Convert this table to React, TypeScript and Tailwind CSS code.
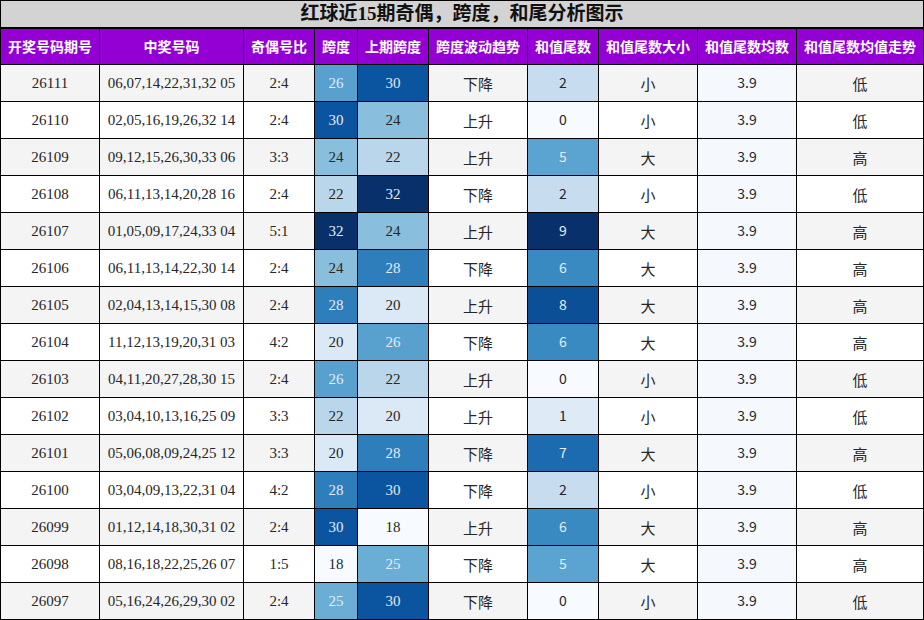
type Row = {
  issue: string;
  nums: string;
  ratio: string;
  span: number;
  prevSpan: number;
  trend: string;
  tail: number;
  size: string;
  avg: string;
  level: string;
};

const rows: Row[] = [
  { issue: "26111", nums: "06,07,14,22,31,32 05", ratio: "2:4", span: 26, prevSpan: 30, trend: "下降", tail: 2, size: "小", avg: "3.9", level: "低" },
  { issue: "26110", nums: "02,05,16,19,26,32 14", ratio: "2:4", span: 30, prevSpan: 24, trend: "上升", tail: 0, size: "小", avg: "3.9", level: "低" },
  { issue: "26109", nums: "09,12,15,26,30,33 06", ratio: "3:3", span: 24, prevSpan: 22, trend: "上升", tail: 5, size: "大", avg: "3.9", level: "高" },
  { issue: "26108", nums: "06,11,13,14,20,28 16", ratio: "2:4", span: 22, prevSpan: 32, trend: "下降", tail: 2, size: "小", avg: "3.9", level: "低" },
  { issue: "26107", nums: "01,05,09,17,24,33 04", ratio: "5:1", span: 32, prevSpan: 24, trend: "上升", tail: 9, size: "大", avg: "3.9", level: "高" },
  { issue: "26106", nums: "06,11,13,14,22,30 14", ratio: "2:4", span: 24, prevSpan: 28, trend: "下降", tail: 6, size: "大", avg: "3.9", level: "高" },
  { issue: "26105", nums: "02,04,13,14,15,30 08", ratio: "2:4", span: 28, prevSpan: 20, trend: "上升", tail: 8, size: "大", avg: "3.9", level: "高" },
  { issue: "26104", nums: "11,12,13,19,20,31 03", ratio: "4:2", span: 20, prevSpan: 26, trend: "下降", tail: 6, size: "大", avg: "3.9", level: "高" },
  { issue: "26103", nums: "04,11,20,27,28,30 15", ratio: "2:4", span: 26, prevSpan: 22, trend: "上升", tail: 0, size: "小", avg: "3.9", level: "低" },
  { issue: "26102", nums: "03,04,10,13,16,25 09", ratio: "3:3", span: 22, prevSpan: 20, trend: "上升", tail: 1, size: "小", avg: "3.9", level: "低" },
  { issue: "26101", nums: "05,06,08,09,24,25 12", ratio: "3:3", span: 20, prevSpan: 28, trend: "下降", tail: 7, size: "大", avg: "3.9", level: "高" },
  { issue: "26100", nums: "03,04,09,13,22,31 04", ratio: "4:2", span: 28, prevSpan: 30, trend: "下降", tail: 2, size: "小", avg: "3.9", level: "低" },
  { issue: "26099", nums: "01,12,14,18,30,31 02", ratio: "2:4", span: 30, prevSpan: 18, trend: "上升", tail: 6, size: "大", avg: "3.9", level: "高" },
  { issue: "26098", nums: "08,16,18,22,25,26 07", ratio: "1:5", span: 18, prevSpan: 25, trend: "下降", tail: 5, size: "大", avg: "3.9", level: "高" },
  { issue: "26097", nums: "05,16,24,26,29,30 02", ratio: "2:4", span: 25, prevSpan: 30, trend: "下降", tail: 0, size: "小", avg: "3.9", level: "低" },
];

const headers = ["开奖号码期号", "中奖号码", "奇偶号比", "跨度", "上期跨度", "跨度波动趋势", "和值尾数", "和值尾数大小", "和值尾数均数", "和值尾数均值走势"];

// Blues scale picked off the picture
const spanColor: Record<number, string> = {
  18: "#f7fbff",
  20: "#dbe9f6",
  22: "#bad6eb",
  24: "#89bfdd",
  25: "#6aaed6",
  26: "#58a1cf",
  28: "#2e7ebc",
  30: "#0b55a0",
  32: "#08306b",
};

const tailColor: Record<number, string> = {
  0: "#f7fbff",
  1: "#deebf7",
  2: "#c8dcf0",
  5: "#5ba3d0",
  6: "#3a8ac2",
  7: "#1c6ab0",
  8: "#0b4f97",
  9: "#08306b",
};

const serif = "font-['Liberation_Serif','Noto_Sans_CJK_SC',serif]";
const cjk = "font-['Noto_Sans_CJK_SC',sans-serif]";
const cell = "flex items-center justify-center border-r border-b border-black";

export default function App() {
  return (
    <div className="h-[620px] w-[924px] overflow-hidden border border-black bg-white text-[#262626]">
      <div
        className={`flex h-[28px] items-center justify-center border-b-2 border-black bg-[#d3d3d3] text-[19px] font-bold text-[#111] ${serif}`}
      >
        红球近15期奇偶，跨度，和尾分析图示
      </div>
      <div className="grid grid-cols-[99px_144px_71px_43px_71px_99px_71px_99px_99px_126px]">
        {headers.map((h, i) => (
          <div
            key={h}
            className={`${cell} h-[36px] bg-[#9400d3] text-[14px] font-bold text-white ${cjk} ${i === 9 ? "border-r-0" : ""}`}
          >
            {h}
          </div>
        ))}
        {rows.map((r, idx) => {
          const bg = idx % 2 === 0 ? "bg-[#f4f4f4]" : "bg-white";
          const last = idx === rows.length - 1;
          const h = last ? "h-[36px] border-b-0" : "h-[37px]";
          return [
            <div key={r.issue + "a"} className={`${cell} ${h} ${bg} ${serif} text-[15px]`}>{r.issue}</div>,
            <div key={r.issue + "b"} className={`${cell} ${h} ${bg} ${serif} text-[15px]`}>{r.nums}</div>,
            <div key={r.issue + "c"} className={`${cell} ${h} ${bg} ${serif} text-[15px]`}>{r.ratio}</div>,
            <div
              key={r.issue + "d"}
              className={`${cell} ${h} ${serif} text-[15px] ${r.span >= 25 ? "text-[#e3edf7]" : ""}`}
              style={{ backgroundColor: spanColor[r.span] }}
            >
              {r.span}
            </div>,
            <div
              key={r.issue + "e"}
              className={`${cell} ${h} ${serif} text-[15px] ${r.prevSpan >= 25 ? "text-[#e3edf7]" : ""}`}
              style={{ backgroundColor: spanColor[r.prevSpan] }}
            >
              {r.prevSpan}
            </div>,
            <div key={r.issue + "f"} className={`${cell} ${h} ${bg} ${cjk} pt-[2px] text-[15px]`}>{r.trend}</div>,
            <div
              key={r.issue + "g"}
              className={`${cell} ${h} ${cjk} pb-[2px] text-[14px] ${r.tail >= 5 ? "text-[#e3edf7]" : ""}`}
              style={{ backgroundColor: tailColor[r.tail] }}
            >
              {r.tail}
            </div>,
            <div key={r.issue + "h"} className={`${cell} ${h} ${bg} ${cjk} pt-[2px] text-[15px]`}>{r.size}</div>,
            <div key={r.issue + "i"} className={`${cell} ${h} bg-[#f5f9fe] ${cjk} pb-[2px] text-[14px]`}>{r.avg}</div>,
            <div key={r.issue + "j"} className={`${cell} ${h} ${bg} ${cjk} border-r-0 pt-[2px] text-[15px]`}>{r.level}</div>,
          ];
        })}
      </div>
    </div>
  );
}
